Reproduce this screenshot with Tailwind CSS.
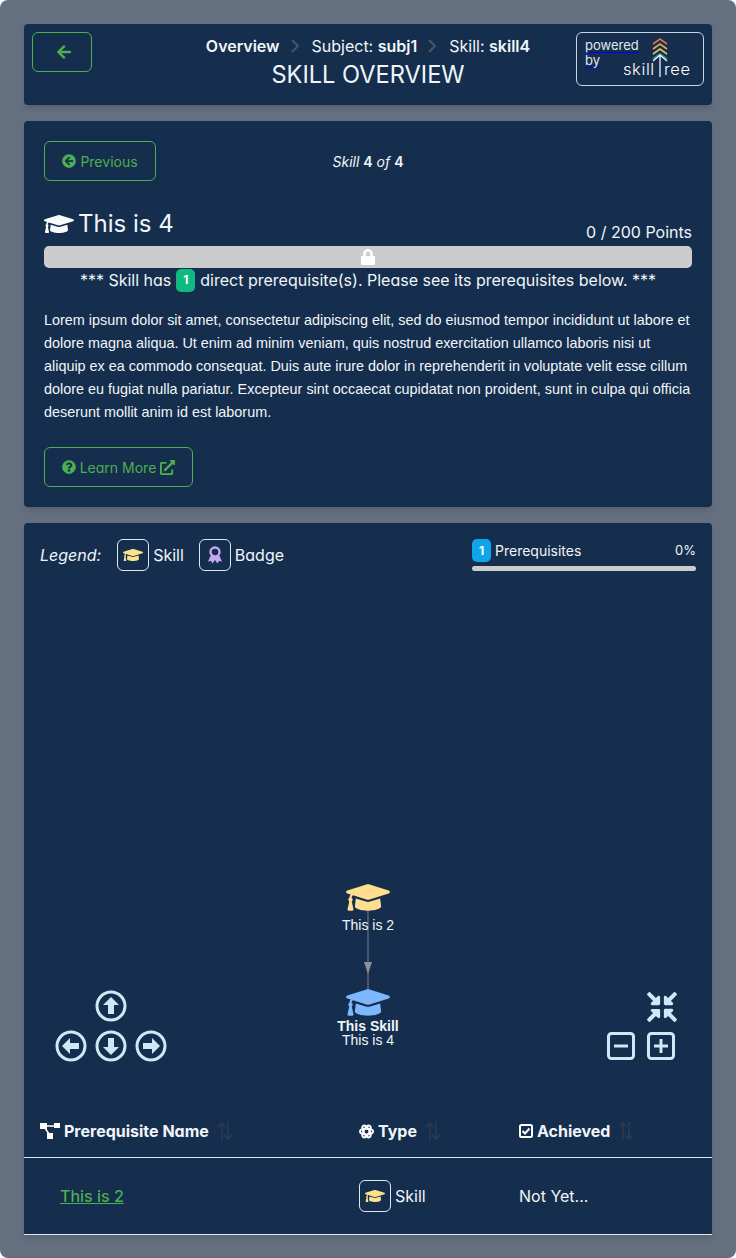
<!DOCTYPE html>
<html lang="en">
<head>
    <meta charset="UTF-8">
    <meta name="viewport" content="width=device-width, initial-scale=1.0">
    <title>Skill Overview</title>
    <script src="https://cdn.jsdelivr.net/npm/@tailwindcss/browser@4"></script>
</head>
<body class="bg-white font-['Inter',sans-serif] [font-feature-settings:'cv11'] text-[#f1f5f9]">
<div class="h-[1258px] overflow-hidden bg-[#64707f] rounded-[8px] px-6 pt-6 flex flex-col gap-4">

    <!-- Header -->
    <div class="h-[81px] shrink-0 bg-[#152e4d] rounded-[4px] shadow-md grid grid-cols-[1fr_auto_1fr] pt-2 px-2">
        <div>
            <button class="w-[60px] h-10 border border-[#4caf50] rounded-[6px] flex items-center justify-center">
                <svg class="w-4 h-4 ml-[4px] fill-[#4caf50]" viewBox="0 0 448 512"><path d="M257.5 445.1l-22.2 22.2c-9.4 9.4-24.6 9.4-33.9 0L7 273c-9.4-9.4-9.4-24.6 0-33.9L201.4 44.7c9.4-9.4 24.6-9.4 33.9 0l22.2 22.2c9.5 9.5 9.3 25-.4 34.3L136.6 216H424c13.3 0 24 10.7 24 24v32c0 13.3-10.7 24-24 24H136.6l120.5 114.8c9.8 9.3 10 24.8.4 34.3z"/></svg>
            </button>
        </div>
        <div class="text-center">
            <div class="flex items-center justify-center gap-[10px] text-[16px] leading-[28px] [font-feature-settings:normal]">
                <span class="font-semibold">Overview</span>
                <svg class="w-[12px] h-[14px] stroke-[#4b5563] fill-none stroke-2" viewBox="0 0 12 14"><path d="M2 1l6 6-6 6"/></svg>
                <span>Subject: <b class="font-semibold">subj1</b></span>
                <svg class="w-[12px] h-[14px] stroke-[#4b5563] fill-none stroke-2" viewBox="0 0 12 14"><path d="M2 1l6 6-6 6"/></svg>
                <span>Skill: <b class="font-semibold">skill4</b></span>
            </div>
            <div class="text-[23.6px] leading-[30px] [font-feature-settings:normal]">SKILL OVERVIEW</div>
        </div>
        <div class="flex justify-end">
            <div class="w-[128px] h-[54px] border border-[#cbd5e1] rounded-[6px] relative pl-2 pt-[5px] text-[13px] leading-[15px] text-[#e2e8f0] [font-feature-settings:normal]">
                <span class="underline decoration-[#0000ee] decoration-1 underline-offset-2 [text-decoration-skip-ink:none]">powered</span><br><span class="underline decoration-[#0000ee] decoration-1 underline-offset-2 [text-decoration-skip-ink:none]">by</span>
                <svg class="absolute left-[74px] top-[4px] w-[18px] h-[24px] fill-none stroke-[1.600]" viewBox="0 0 18 24">
                    <path class="stroke-[#e0734f]" d="M2 7l7-5 7 5"/>
                    <path class="stroke-[#e9a94f]" d="M2 12l7-5 7 5"/>
                    <path class="stroke-[#e8c25a]" d="M2 17l7-5 7 5"/>
                    <path class="stroke-[#2a9d8f]" d="M2 22l7-5 7 5"/>
                </svg>
                <svg class="absolute left-[75px] top-[20px] w-[16px] h-[24px] fill-none stroke-[#f1f5f9] stroke-[1.300]" viewBox="0 0 16 24"><path d="M8 24V2M1 8l7-6 7 6"/></svg>
                <div class="absolute left-[46px] top-[25px] text-[16.500px] leading-[22px] font-light tracking-[0.6px] text-white">skill</div>
                <div class="absolute left-[87px] top-[25px] text-[16.500px] leading-[22px] font-light tracking-[0.6px] text-white">ree</div>
            </div>
        </div>
    </div>

    <!-- Skill card -->
    <div class="h-[386px] shrink-0 bg-[#152e4d] rounded-[4px] shadow-md p-5">
        <div class="grid grid-cols-[1fr_auto_1fr] items-center h-10">
            <div>
                <button class="w-[112px] h-10 border border-[#4caf50] rounded-[6px] flex items-center justify-center gap-1 text-[#4caf50] text-[14px]">
                    <svg class="w-[14px] h-[14px] fill-[#4caf50]" viewBox="0 0 512 512"><path d="M256 504C119 504 8 393 8 256S119 8 256 8s248 111 248 248-111 248-248 248zm28.9-143.6L209.4 288H392c13.3 0 24-10.7 24-24v-16c0-13.3-10.7-24-24-24H209.4l75.5-72.4c9.7-9.3 9.9-24.8.4-34.3l-11-10.9c-9.4-9.4-24.6-9.4-33.9 0L107.7 239c-9.4 9.4-9.4 24.6 0 33.9l132.7 132.7c9.4 9.4 24.6 9.4 33.9 0l11-10.9c9.5-9.5 9.3-25-.4-34.3z"/></svg>
                    Previous
                </button>
            </div>
            <div class="text-[14px] italic">Skill <b class="font-semibold not-italic">4</b> of <b class="font-semibold not-italic">4</b></div>
            <div></div>
        </div>
        <div class="flex items-end justify-between mt-[26px] h-[37px]">
            <div class="flex items-center gap-[4px] text-[24px] leading-[34px] self-start">
                <svg class="w-[30px] h-[24px] fill-[#f8fafc]" viewBox="0 0 640 512"><path d="M622.34 153.2L343.4 67.5c-15.2-4.67-31.6-4.67-46.79 0L17.66 153.2c-23.54 7.23-23.54 38.36 0 45.59l48.63 14.94c-10.67 13.19-17.23 29.28-17.88 46.9C38.78 266.15 32 276.11 32 288c0 10.78 5.68 19.85 13.86 25.65L20.33 428.53C18.11 438.52 25.71 448 35.94 448h56.11c10.24 0 17.84-9.48 15.62-19.47L82.14 313.65C90.32 307.85 96 298.78 96 288c0-11.57-6.47-21.25-15.66-26.87.76-15.02 8.44-28.3 20.69-36.72L296.6 284.5c9.06 2.78 26.44 6.25 46.79 0l278.95-85.7c23.55-7.24 23.55-38.36 0-45.6zM352.79 315.09c-28.53 8.76-52.84 3.92-65.59 0l-145.02-44.55L128 384c0 35.35 85.96 64 192 64s192-28.65 192-64l-14.18-113.47-145.03 44.56z"/></svg>
                <span>This is 4</span>
            </div>
            <div class="text-[16px] leading-[24px]">0 / 200 Points</div>
        </div>
        <div class="h-[22px] mt-[2px] bg-[#cccccc] rounded-[5px] flex items-center justify-center">
            <svg class="w-[14px] h-[16px] fill-white" viewBox="0 0 448 512"><path d="M400 224h-24v-72C376 68.2 307.8 0 224 0S72 68.2 72 152v72H48c-26.5 0-48 21.5-48 48v192c0 26.5 21.5 48 48 48h352c26.5 0 48-21.5 48-48V272c0-26.5-21.5-48-48-48zm-104 0H152v-72c0-39.7 32.3-72 72-72s72 32.3 72 72v72z"/></svg>
        </div>
        <div class="flex items-center justify-center gap-[4px] text-[16px] leading-[24px] mt-0">
            <span>*** Skill has</span>
            <span class="w-[19px] h-[23px] mx-[1px] bg-[#10b981] rounded-[5px] flex items-center justify-center text-[12px] font-bold text-white">1</span>
            <span>direct prerequisite(s). Please see its prerequisites below. ***</span>
        </div>
        <p class="mt-[17px] font-['Liberation_Sans',Arial,sans-serif] text-[14.4px] leading-[23px]">Lorem ipsum dolor sit amet, consectetur adipiscing elit, sed do eiusmod tempor incididunt ut labore et dolore magna aliqua. Ut enim ad minim veniam, quis nostrud exercitation ullamco laboris nisi ut aliquip ex ea commodo consequat. Duis aute irure dolor in reprehenderit in voluptate velit esse cillum dolore eu fugiat nulla pariatur. Excepteur sint occaecat cupidatat non proident, sunt in culpa qui officia deserunt mollit anim id est laborum.</p>
        <button class="mt-[23px] w-[149px] h-10 border border-[#4caf50] rounded-[6px] flex items-center justify-center gap-1 text-[#4caf50] text-[14px]">
            <svg class="w-[14px] h-[14px] fill-[#4caf50]" viewBox="0 0 512 512"><path d="M504 256c0 136.997-111.043 248-248 248S8 392.997 8 256C8 119.083 119.043 8 256 8s248 111.083 248 248zM262.655 90c-54.497 0-89.255 22.957-116.549 63.758-3.536 5.286-2.353 12.415 2.715 16.258l34.699 26.31c5.205 3.947 12.621 3.008 16.665-2.122 17.864-22.658 30.113-35.797 57.303-35.797 20.429 0 45.698 13.148 45.698 32.958 0 14.976-12.363 22.667-32.534 33.976C247.128 238.528 216 254.941 216 296v4c0 6.627 5.373 12 12 12h56c6.627 0 12-5.373 12-12v-1.333c0-28.462 83.186-29.647 83.186-106.667 0-58.002-60.165-102-116.531-102zM256 338c-25.365 0-46 20.635-46 46 0 25.364 20.635 46 46 46s46-20.636 46-46c0-25.365-20.635-46-46-46z"/></svg>
            Learn More
            <svg class="w-[15px] h-[15px] fill-[#4caf50]" viewBox="0 0 512 512"><path d="M432,320H400a16,16,0,0,0-16,16V448H64V128H208a16,16,0,0,0,16-16V80a16,16,0,0,0-16-16H48A48,48,0,0,0,0,112V464a48,48,0,0,0,48,48H400a48,48,0,0,0,48-48V336A16,16,0,0,0,432,320ZM488,0h-128c-21.37,0-32.05,25.91-17,41l35.73,35.73L135,320.37a24,24,0,0,0,0,34L157.67,377a24,24,0,0,0,34,0L435.28,133.32,471,169c15,15,41,4.5,41-17V24A24,24,0,0,0,488,0Z"/></svg>
        </button>
    </div>

    <!-- Prerequisites card -->
    <div class="h-[712px] shrink-0 bg-[#152e4d] rounded-t-[4px] shadow-md">
        <!-- Legend -->
        <div class="flex justify-between pt-4 pl-4 pr-4">
            <div class="flex items-center h-8 text-[16px]">
                <span class="italic mr-4">Legend:</span>
                <span class="w-8 h-8 border border-[#e2e8f0] rounded-[6px] flex items-center justify-center">
                    <svg class="w-5 h-4 fill-[#fde08b]" viewBox="0 0 640 512"><path d="M622.34 153.2L343.4 67.5c-15.2-4.67-31.6-4.67-46.79 0L17.66 153.2c-23.54 7.23-23.54 38.36 0 45.59l48.63 14.94c-10.67 13.19-17.23 29.28-17.88 46.9C38.78 266.15 32 276.11 32 288c0 10.78 5.68 19.85 13.86 25.65L20.33 428.53C18.11 438.52 25.71 448 35.94 448h56.11c10.24 0 17.84-9.48 15.62-19.47L82.14 313.65C90.32 307.85 96 298.78 96 288c0-11.57-6.47-21.25-15.66-26.87.76-15.02 8.44-28.3 20.69-36.72L296.6 284.5c9.06 2.78 26.44 6.25 46.79 0l278.95-85.7c23.55-7.24 23.55-38.36 0-45.6zM352.79 315.09c-28.53 8.76-52.84 3.92-65.59 0l-145.02-44.55L128 384c0 35.35 85.96 64 192 64s192-28.65 192-64l-14.18-113.47-145.03 44.56z"/></svg>
                </span>
                <span class="ml-[4px] mr-[15px]">Skill</span>
                <span class="w-8 h-8 border border-[#e2e8f0] rounded-[6px] flex items-center justify-center">
                    <svg class="w-[14px] h-[18px]" viewBox="0 0 14 18"><path class="fill-[#c4a8f0]" d="M2.500 10l-2.500 5.500 3-.5 1.500 2.500 2.500-3.500 2.500 3.500 1.500-2.500 3 .5-2.500-5.500z"/><circle class="fill-[#152e4d] stroke-[#c4a8f0] stroke-[2.400]" cx="7" cy="6" r="4.500"/></svg>
                </span>
                <span class="ml-[4px]">Badge</span>
            </div>
            <div class="w-[224px]">
                <div class="flex items-center justify-between h-[23px] text-[14px] mt-0">
                    <span class="flex items-center gap-[4px]">
                        <span class="w-[19px] h-[23px] bg-[#0ea5e9] rounded-[5px] flex items-center justify-center text-[12px] font-bold text-white">1</span>
                        Prerequisites
                    </span>
                    <span class="text-[13px]">0%</span>
                </div>
                <div class="h-[5px] mt-[4px] bg-[#cccccc] rounded-[3px]"></div>
            </div>
        </div>

        <!-- Graph canvas -->
        <div class="relative h-[534px] font-['Liberation_Sans',Arial,sans-serif] text-[14px] leading-[14px] text-center [font-feature-settings:normal]">
            <svg class="absolute left-[340px] top-[339px] w-2 h-[80px]" viewBox="0 0 8 80"><path d="M4 0v80" class="stroke-[#55647a] stroke-[1.500]"/><path d="M0 52h8l-4 12z" class="fill-[#8a8f98]"/></svg>
            <svg class="absolute left-[322px] top-[309px] w-11 h-[35px] fill-[#ffdf8f]" viewBox="0 0 640 512"><path d="M622.34 153.2L343.4 67.5c-15.2-4.67-31.6-4.67-46.79 0L17.66 153.2c-23.54 7.23-23.54 38.36 0 45.59l48.63 14.94c-10.67 13.19-17.23 29.28-17.88 46.9C38.78 266.15 32 276.11 32 288c0 10.78 5.68 19.85 13.86 25.65L20.33 428.53C18.11 438.52 25.71 448 35.94 448h56.11c10.24 0 17.84-9.48 15.62-19.47L82.14 313.65C90.32 307.85 96 298.78 96 288c0-11.57-6.47-21.25-15.66-26.87.76-15.02 8.44-28.3 20.69-36.72L296.6 284.5c9.06 2.78 26.44 6.25 46.79 0l278.95-85.7c23.55-7.24 23.55-38.36 0-45.6zM352.79 315.09c-28.53 8.76-52.84 3.92-65.59 0l-145.02-44.55L128 384c0 35.35 85.96 64 192 64s192-28.65 192-64l-14.18-113.47-145.03 44.56z"/></svg>
            <div class="absolute left-[294px] w-[100px] top-[347px]">This is 2</div>
            <svg class="absolute left-[322px] top-[414px] w-11 h-[35px] fill-[#7db8ff]" viewBox="0 0 640 512"><path d="M622.34 153.2L343.4 67.5c-15.2-4.67-31.6-4.67-46.79 0L17.66 153.2c-23.54 7.23-23.54 38.36 0 45.59l48.63 14.94c-10.67 13.19-17.23 29.28-17.88 46.9C38.78 266.15 32 276.11 32 288c0 10.78 5.68 19.85 13.86 25.65L20.33 428.53C18.11 438.52 25.71 448 35.94 448h56.11c10.24 0 17.84-9.48 15.62-19.47L82.14 313.65C90.32 307.85 96 298.78 96 288c0-11.57-6.47-21.25-15.66-26.87.76-15.02 8.44-28.3 20.69-36.72L296.6 284.5c9.06 2.78 26.44 6.25 46.79 0l278.95-85.7c23.55-7.24 23.55-38.36 0-45.6zM352.79 315.09c-28.53 8.76-52.84 3.92-65.59 0l-145.02-44.55L128 384c0 35.35 85.96 64 192 64s192-28.65 192-64l-14.18-113.47-145.03 44.56z"/></svg>
            <div class="absolute left-[294px] w-[100px] top-[448px]"><b>This Skill</b><br>This is 4</div>

            <!-- Nav buttons -->
            <svg class="absolute left-[30px] top-[419px] w-[114px] h-[72px] fill-none stroke-[#cfe8f6] stroke-[3]" viewBox="0 0 114 72">
                <circle cx="57" cy="16" r="14"/><circle cx="17" cy="56" r="14"/><circle cx="57" cy="56" r="14"/><circle cx="97" cy="56" r="14"/>
                <path class="fill-[#cfe8f6] stroke-none" d="M57 7l8 8h-5v9h-6v-9h-5z"/>
                <path class="fill-[#cfe8f6] stroke-none" d="M57 65l8-8h-5v-9h-6v9h-5z"/>
                <path class="fill-[#cfe8f6] stroke-none" d="M8 56l8-8v5h9v6h-9v5z"/>
                <path class="fill-[#cfe8f6] stroke-none" d="M106 56l-8-8v5h-9v6h9v5z"/>
            </svg>
            <svg class="absolute left-[623px] top-[421px] w-[30px] h-[30px] fill-[#cfe8f6]" viewBox="0 0 512 512"><path d="M200 288H88c-21.4 0-32.1 25.8-17 41l32.9 31-99.2 99.3c-6.2 6.2-6.2 16.4 0 22.6l25.4 25.4c6.2 6.2 16.4 6.2 22.6 0L152 408l31.1 33c15.1 15.1 40.9 4.4 40.9-17V312c0-13.3-10.7-24-24-24zm112-64h112c21.4 0 32.1-25.9 17-41l-33-31 99.3-99.3c6.2-6.2 6.2-16.4 0-22.6L481.9 4.7c-6.2-6.2-16.4-6.2-22.6 0L360 104l-31.1-33C313.8 55.9 288 66.6 288 88v112c0 13.3 10.7 24 24 24zm96 136l33-31.1c15.1-15.1 4.4-41-17-41H312c-13.3 0-24 10.7-24 24v112c0 21.4 25.9 32.1 41 17l31-32.9 99.3 99.3c6.2 6.2 16.4 6.2 22.6 0l25.4-25.4c6.2-6.2 6.200-16.400 0-22.6L408 360zM183 71.100L152 104 52.700 4.700c-6.200-6.200-16.400-6.200-22.600 0L4.700 30.100c-6.200 6.200-6.200 16.400 0 22.600L104 152l-33 31.100C55.900 198.200 66.600 224 88 224h112c13.300 0 24-10.700 24-24V88c0-21.300-25.900-32-41-16.900z"/></svg>
            <svg class="absolute left-[583px] top-[461px] w-[68px] h-[28px] fill-none stroke-[#cfe8f6] stroke-[3]" viewBox="0 0 68 28">
                <rect x="1.500" y="1.500" width="25" height="25" rx="3"/><path d="M7 14h14"/>
                <rect x="41.500" y="1.500" width="25" height="25" rx="3"/><path d="M47 14h14M54 7v14"/>
            </svg>
        </div>

        <!-- Table -->
        <div class="grid grid-cols-[319px_160px_1fr] h-[53px] items-center pl-4 border-b border-[#e2e8f0] text-[16px] font-bold">
            <div class="flex items-center gap-[4px]">
                <svg class="w-5 h-[16px]" viewBox="0 0 20 16"><rect width="7" height="6" class="fill-white"/><rect x="14" y="0" width="6" height="5" class="fill-white"/><rect x="7" y="10" width="6" height="6" class="fill-white"/><path d="M6 3h9M5 5l4 6" class="stroke-white stroke-[1.500]"/></svg>
                <span>Prerequisite Name</span>
                <svg class="w-4 h-[18px] ml-[4px] stroke-[#2d3b4f] fill-none stroke-[1.500]" viewBox="0 0 16 18"><path d="M5 18V1M1 5l4-4 4 4M11 0v17M7 13l4 4 4-4"/></svg>
            </div>
            <div class="flex items-center gap-[4px]">
                <svg class="w-[15px] h-[15px] fill-none stroke-white stroke-2" viewBox="0 0 16 16"><ellipse cx="8" cy="8" rx="7" ry="3"/><ellipse cx="8" cy="8" rx="7" ry="3" transform="rotate(60 8 8)"/><ellipse cx="8" cy="8" rx="7" ry="3" transform="rotate(120 8 8)"/></svg>
                <span>Type</span>
                <svg class="w-4 h-[18px] ml-[4px] stroke-[#2d3b4f] fill-none stroke-[1.500]" viewBox="0 0 16 18"><path d="M5 18V1M1 5l4-4 4 4M11 0v17M7 13l4 4 4-4"/></svg>
            </div>
            <div class="flex items-center gap-[4px]">
                <svg class="w-[14px] h-[14px] fill-none stroke-white stroke-2" viewBox="0 0 14 14"><rect x="1" y="1" width="12" height="12" rx="1.500"/><path d="M3.500 7l2.500 2.500 4.500-5"/></svg>
                <span>Achieved</span>
                <svg class="w-4 h-[18px] ml-[4px] stroke-[#2d3b4f] fill-none stroke-[1.500]" viewBox="0 0 16 18"><path d="M5 18V1M1 5l4-4 4 4M11 0v17M7 13l4 4 4-4"/></svg>
            </div>
        </div>
        <div class="grid grid-cols-[319px_160px_1fr] h-[77px] items-center pl-4 border-b border-[#e2e8f0] text-[16px]">
            <a href="#" class="pl-5 text-[#4caf50] font-medium underline">This is 2</a>
            <div class="flex items-center gap-[4px]">
                <span class="w-8 h-8 border border-[#e2e8f0] rounded-[6px] flex items-center justify-center">
                    <svg class="w-5 h-4 fill-[#fde08b]" viewBox="0 0 640 512"><path d="M622.34 153.2L343.4 67.5c-15.2-4.67-31.6-4.67-46.79 0L17.66 153.2c-23.54 7.23-23.54 38.36 0 45.59l48.63 14.94c-10.67 13.19-17.23 29.28-17.88 46.9C38.78 266.15 32 276.11 32 288c0 10.78 5.68 19.85 13.86 25.65L20.33 428.53C18.11 438.52 25.71 448 35.94 448h56.11c10.24 0 17.84-9.48 15.62-19.47L82.14 313.65C90.32 307.85 96 298.78 96 288c0-11.57-6.47-21.25-15.66-26.87.76-15.02 8.44-28.3 20.69-36.72L296.6 284.5c9.06 2.78 26.44 6.25 46.79 0l278.95-85.7c23.55-7.24 23.55-38.36 0-45.6zM352.79 315.09c-28.53 8.76-52.84 3.92-65.59 0l-145.02-44.55L128 384c0 35.35 85.96 64 192 64s192-28.65 192-64l-14.18-113.47-145.03 44.56z"/></svg>
                </span>
                <span>Skill</span>
            </div>
            <div>Not Yet...</div>
        </div>
    </div>
</div>
</body>
</html>
